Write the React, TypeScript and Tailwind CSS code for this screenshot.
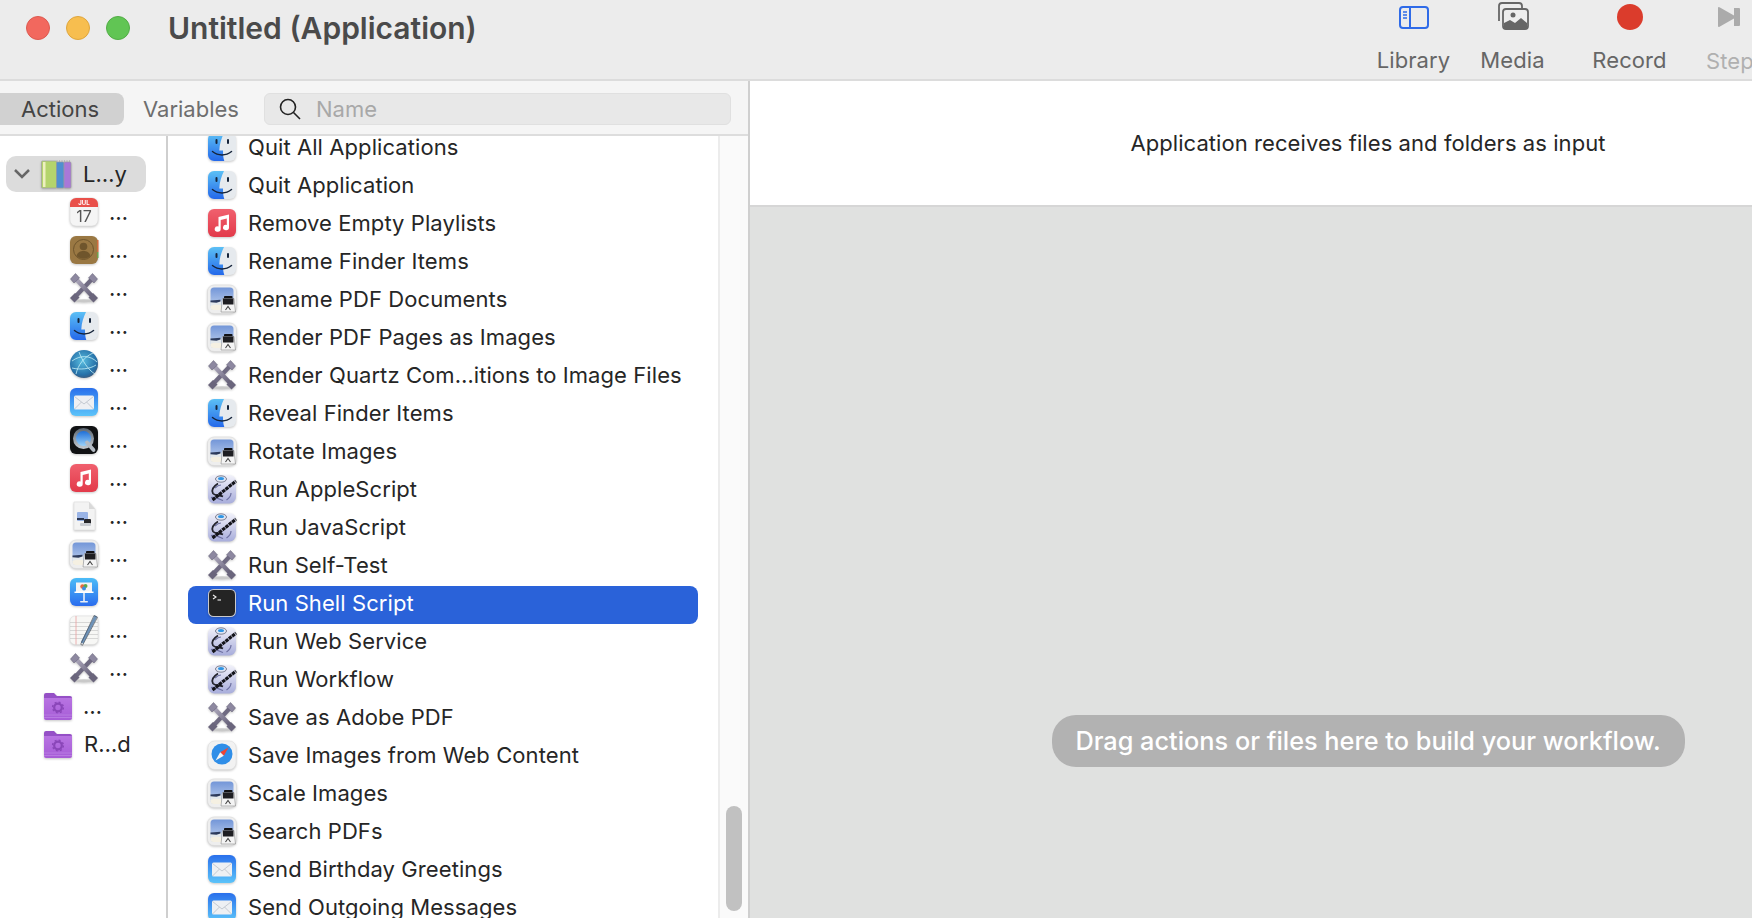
import type { ReactNode } from "react";

// Small app icons, all on a 32x32 grid
const Svg = ({ children, size = 32 }: { children: ReactNode; size?: number }) => (
  <svg viewBox="0 0 32 32" width={size} height={size} className="shrink-0 drop-shadow-[0_1px_1px_rgba(0,0,0,0.22)]">
    {children}
  </svg>
);

const Finder = () => (
  <Svg>
    <defs>
      <linearGradient id="finderL" x1="0" y1="0" x2="0" y2="1">
        <stop offset="0" stopColor="#5cc0f5" />
        <stop offset="1" stopColor="#2468ea" />
      </linearGradient>
    </defs>
    <rect x="2" y="2" width="28" height="28" rx="6" fill="#e6eaee" />
    <path d="M8 2h10c-2.500 5-4.500 11-4.700 17.500H17c0 4 .3 7.500 1.300 10.500H8a6 6 0 0 1-6-6V8a6 6 0 0 1 6-6z" fill="url(#finderL)" />
    <rect x="9.500" y="8" width="2" height="5" rx="1" fill="#16243a" />
    <rect x="21" y="8" width="2" height="5" rx="1" fill="#16243a" />
    <path d="M6.500 20.500c5.500 4.500 13.500 4.500 19 0" fill="none" stroke="#16243a" strokeWidth="1.500" strokeLinecap="round" />
  </Svg>
);

const Music = () => (
  <Svg>
    <defs>
      <linearGradient id="musicBg" x1="0" y1="0" x2="0" y2="1">
        <stop offset="0" stopColor="#f0606e" />
        <stop offset="1" stopColor="#e23a4a" />
      </linearGradient>
    </defs>
    <rect x="2" y="2" width="28" height="28" rx="6" fill="url(#musicBg)" />
    <path d="M12.500 10l10.500-2.500v13a3 2.700 0 1 1-2.200-2.600v-6.400l-6.100 1.400v9.200a3 2.700 0 1 1-2.200-2.600z" fill="#fff" />
  </Svg>
);

const Preview = () => (
  <Svg>
    <defs>
      <linearGradient id="sky" x1="0" y1="0" x2="0" y2="1">
        <stop offset="0" stopColor="#7396d8" />
        <stop offset="1" stopColor="#c6d6f0" />
      </linearGradient>
    </defs>
    <rect x="1.500" y="2" width="29" height="28.500" rx="6.500" fill="#eeeeee" stroke="#d8d8d8" strokeWidth=".6" />
    <rect x="4.500" y="4.500" width="23" height="22.500" rx="3.500" fill="url(#sky)" />
    <path d="M4.500 18l11-.8V27H8a3.500 3.500 0 0 1-3.500-3.500z" fill="#e4e9ec" />
    <path d="M4.500 17.500l10-.7v1.800l-4 1.200-6-.6z" fill="#2d3b5c" />
    <path d="M4.500 23c4-1.800 7-1.200 11-.8V27H8a3.500 3.500 0 0 1-3.500-3.500z" fill="#f5f0e2" />
    <rect x="18" y="13" width="8.500" height="2.500" rx=".8" fill="#111114" />
    <path d="M16.500 15.500h11.500l1.500 13.500h-14.500z" fill="#f4f4f4" stroke="#777" strokeWidth=".5" />
    <rect x="17" y="15.500" width="10.500" height="6" fill="#1e1e22" />
    <path d="M19.500 27l2.500-3.500 2.500 3.500" fill="none" stroke="#444" strokeWidth="1.100" />
  </Svg>
);

const Tools = () => (
  <Svg>
    <defs>
      <linearGradient id="toolBar" x1="0" y1="0" x2="1" y2="1">
        <stop offset="0" stopColor="#b3aec2" />
        <stop offset="1" stopColor="#5f5a72" />
      </linearGradient>
    </defs>
    <ellipse cx="16" cy="28.800" rx="11" ry="1.500" fill="#c9c9c9" />
    <path d="M25 6L7 25" stroke="#6f6a82" strokeWidth="4.200" />
    <path d="M7 6l18 19" stroke="url(#toolBar)" strokeWidth="4.200" />
    <path d="M2.500 7L7.500 1.500 11.500 6 6 11z" fill="#8d88a0" stroke="#5f5a72" strokeWidth=".5" />
    <path d="M29.500 7L24.500 1.500 20.500 6 26 11z" fill="#8d88a0" stroke="#5f5a72" strokeWidth=".5" />
    <path d="M2 26l5-5 4.500 4.500-5 5z" fill="#6a657c" />
    <path d="M30 26l-5-5-4.500 4.500 5 5z" fill="#6a657c" />
  </Svg>
);

const Automator = () => (
  <Svg>
    <defs>
      <linearGradient id="autoBg" x1="0" y1="0" x2="0" y2="1">
        <stop offset="0" stopColor="#f2f2fa" />
        <stop offset="1" stopColor="#a8addb" />
      </linearGradient>
    </defs>
    <rect x="2" y="2" width="28" height="28.500" rx="6.500" fill="url(#autoBg)" />
    <ellipse cx="15" cy="6" rx="5.500" ry="3.200" fill="#dfe6f4" stroke="#556" strokeWidth=".7" />
    <ellipse cx="15" cy="5.500" rx="3" ry="1.600" fill="#2f95e4" />
    <path d="M12 10.500c-5 3-7 7-5 10 2 2.500 6 1 10 3" fill="none" stroke="#23232c" strokeWidth="1.800" />
    <path d="M5 24.500c3-1 7 1 12 3M20.500 27c3-2 4.500-4 4.500-7M9 15c2-2 4-3 6-3" fill="none" stroke="#6d70a0" strokeWidth="1.200" />
    <path d="M6.500 27L30 8" stroke="#14141a" strokeWidth="3.200" strokeDasharray="3.500 .7" />
  </Svg>
);

const Terminal = () => (
  <Svg>
    <rect x="2" y="2" width="28" height="28" rx="5.500" fill="#c9c9cc" />
    <rect x="3" y="3" width="26" height="26" rx="4.500" fill="#242424" />
    <path d="M7 8l3 2-3 2" fill="none" stroke="#f0f0f0" strokeWidth="1.100" />
    <path d="M11.500 13h3.500" stroke="#f0f0f0" strokeWidth="1.100" />
  </Svg>
);

const Safari = () => (
  <Svg>
    <rect x="2" y="2" width="28" height="28.500" rx="6.500" fill="#f2f2f2" stroke="#dddddd" strokeWidth=".6" />
    <circle cx="16" cy="15" r="10.500" fill="#2f8ee8" />
    <path d="M22.500 8.500L17.800 16.800 14.200 13.200z" fill="#ee4433" />
    <path d="M9.500 21.500l4.700-8.300 3.600 3.600z" fill="#f4f4f4" />
  </Svg>
);

const Mail = () => (
  <Svg>
    <defs>
      <linearGradient id="mailBg" x1="0" y1="0" x2="0" y2="1">
        <stop offset="0" stopColor="#2a70ec" />
        <stop offset="1" stopColor="#5cc4fa" />
      </linearGradient>
    </defs>
    <rect x="2" y="2" width="28" height="28" rx="6" fill="url(#mailBg)" />
    <rect x="6" y="9.500" width="20" height="14" rx="1.500" fill="#eef0f3" />
    <path d="M6.500 10.500L16 18l9.500-7.500M6.500 23l7-7M25.500 23l-7-7" fill="none" stroke="#b9bfc8" strokeWidth=".8" />
  </Svg>
);

const Calendar = () => (
  <svg viewBox="0 0 32 32" width="32" height="32" className="shrink-0 drop-shadow-[0_1px_1px_rgba(0,0,0,0.22)]">
    <rect x="2" y="2" width="28" height="28" rx="6" fill="#f5f5f5" stroke="#dddddd" strokeWidth=".6" />
    <path d="M8 2h16a6 6 0 0 1 6 6v3H2V8a6 6 0 0 1 6-6z" fill="#e9504a" />
    <text x="16" y="9" textAnchor="middle" fontSize="6" fontWeight="700" fill="#fff" fontFamily="Inter, sans-serif">JUL</text>
    <text x="16" y="25.500" textAnchor="middle" fontSize="16" fill="#555" fontFamily="Inter, sans-serif">17</text>
  </svg>
);

const Contacts = () => (
  <Svg>
    <rect x="2" y="2" width="28" height="28" rx="6" fill="#9a7843" />
    <path d="M29 6h1.500v6H29zM29 12h1.500v6H29z" fill="#d06b3c" />
    <path d="M29 18h1.500v6H29z" fill="#6fa04a" />
    <circle cx="15.500" cy="15.500" r="10" fill="none" stroke="#6f552c" strokeWidth="1" />
    <circle cx="15.500" cy="12.500" r="3.800" fill="#6f552c" />
    <path d="M8.500 22c1-4 4-5 7-5s6 1 7 5c-4 3.500-10 3.500-14 0z" fill="#6f552c" />
  </Svg>
);

const Globe = () => (
  <Svg>
    <defs>
      <radialGradient id="globeBg" cx=".45" cy=".4" r=".7">
        <stop offset="0" stopColor="#58bde0" />
        <stop offset=".7" stopColor="#2670a8" />
        <stop offset="1" stopColor="#4a4f66" />
      </radialGradient>
    </defs>
    <circle cx="16" cy="16" r="14" fill="url(#globeBg)" />
    <path d="M4 13c8-6 18-6 25 1M8 26c2-9 8-17 17-21M11 4c3 8 9 18 16 22M4 20c8 2 18 1 24-3" fill="none" stroke="#c5f0f7" strokeWidth=".8" />
  </Svg>
);

const QuickTime = () => (
  <Svg>
    <defs>
      <linearGradient id="qtRing" x1="0" y1="0" x2="0" y2="1">
        <stop offset="0" stopColor="#5b6570" />
        <stop offset="1" stopColor="#c6ccd3" />
      </linearGradient>
      <linearGradient id="qtCore" x1="0" y1="0" x2="0" y2="1">
        <stop offset="0" stopColor="#1f6fd8" />
        <stop offset="1" stopColor="#9bd2fa" />
      </linearGradient>
    </defs>
    <rect x="2" y="2" width="28" height="28" rx="6" fill="#111214" />
    <circle cx="15.500" cy="14.500" r="10.500" fill="url(#qtRing)" />
    <circle cx="15.500" cy="14.500" r="7.500" fill="url(#qtCore)" />
    <path d="M19 18.500l6.500 7.500" stroke="#b4bbc4" strokeWidth="3.800" strokeLinecap="round" />
  </Svg>
);

const PdfDoc = () => (
  <Svg>
    <path d="M6 2h15l6 7v21H6z" fill="#f3f3f3" stroke="#dddddd" strokeWidth=".6" />
    <path d="M21 2v7h6z" fill="#d9d9d9" />
    <rect x="9" y="12" width="11" height="9" rx="1" fill="#9ab4e6" />
    <rect x="9" y="18" width="7" height="2" fill="#2a3752" />
    <rect x="16" y="19" width="7" height="5" rx="1" fill="#26262a" />
    <rect x="12" y="23" width="11" height="3" rx="1" fill="#c9ccd2" />
  </Svg>
);

const Keynote = () => (
  <Svg>
    <defs>
      <linearGradient id="keyBg" x1="0" y1="0" x2="0" y2="1">
        <stop offset="0" stopColor="#4bbcf7" />
        <stop offset="1" stopColor="#2a6cee" />
      </linearGradient>
    </defs>
    <rect x="2" y="2" width="28" height="28" rx="6" fill="url(#keyBg)" />
    <rect x="8" y="6.500" width="16" height="10" fill="#f4f4f4" />
    <rect x="6.500" y="15.500" width="19" height="1.500" fill="#ffffff" />
    <circle cx="14.500" cy="10.500" r="2.200" fill="#e8683d" />
    <circle cx="17.500" cy="10" r="2" fill="#5aa84b" />
    <circle cx="16" cy="12.500" r="2" fill="#3c8ee0" />
    <rect x="15.200" y="17" width="1.600" height="8.500" fill="#e8eef6" />
    <rect x="12" y="25" width="8" height="1.400" rx=".7" fill="#e8eef6" />
  </Svg>
);

const TextEdit = () => (
  <Svg>
    <rect x="2" y="2" width="28" height="28.500" rx="5" fill="#f7f7f5" stroke="#dddddd" strokeWidth=".6" />
    <path d="M2 8.500h28M2 12.500h28M2 16.500h28M2 20.500h28M2 24.500h28" stroke="#c8c8c8" strokeWidth=".7" />
    <path d="M8 2v28.500" stroke="#eaa0a0" strokeWidth=".8" />
    <path d="M28 2L14 29" stroke="#6f93b8" strokeWidth="3" />
    <path d="M26 1.500l3.500 1.800-15 28-1.800-1z" fill="none" stroke="#3a3f48" strokeWidth=".6" />
  </Svg>
);

const PurpleFolder = () => (
  <Svg>
    <defs>
      <linearGradient id="folderBg" x1="0" y1="0" x2="0" y2="1">
        <stop offset="0" stopColor="#b874e2" />
        <stop offset="1" stopColor="#a65cd6" />
      </linearGradient>
    </defs>
    <path d="M2 5a2 2 0 0 1 2-2h8l3 3h13a2 2 0 0 1 2 2v4H2z" fill="#9550c6" />
    <path d="M2 8h28v20a2 2 0 0 1-2 2H4a2 2 0 0 1-2-2z" fill="url(#folderBg)" />
    <path d="M2 25h28M2 27.500h28" stroke="#bf86e6" strokeWidth=".7" />
    <circle cx="16" cy="17.500" r="3.800" fill="none" stroke="#8a46b8" strokeWidth="2.200" />
    <circle cx="16" cy="17.500" r="5.400" fill="none" stroke="#8a46b8" strokeWidth="1.400" strokeDasharray="2 2.240" />
  </Svg>
);

const Books = () => (
  <Svg>
    <rect x="1.500" y="3" width="15" height="27" rx="1" fill="#b4d46c" stroke="#9a9a9a" strokeWidth=".6" />
    <rect x="3" y="4" width="2.500" height="25" fill="#eef0c0" />
    <rect x="16.500" y="4" width="7.500" height="26" rx="1" fill="#4f8fd0" stroke="#9a9a9a" strokeWidth=".6" />
    <rect x="24" y="4" width="7" height="26" rx="1" fill="#a878d8" stroke="#9a9a9a" strokeWidth=".6" />
    <path d="M16.500 3h14" stroke="#9a9a9a" strokeWidth="1" strokeDasharray="1 1.500" />
  </Svg>
);

const libraryChildren = [Calendar, Contacts, Tools, Finder, Globe, Mail, QuickTime, Music, PdfDoc, Preview, Keynote, TextEdit, Tools];

const actions = [
  { icon: Finder, title: "Quit All Applications" },
  { icon: Finder, title: "Quit Application" },
  { icon: Music, title: "Remove Empty Playlists" },
  { icon: Finder, title: "Rename Finder Items" },
  { icon: Preview, title: "Rename PDF Documents" },
  { icon: Preview, title: "Render PDF Pages as Images" },
  { icon: Tools, title: "Render Quartz Com…itions to Image Files" },
  { icon: Finder, title: "Reveal Finder Items" },
  { icon: Preview, title: "Rotate Images" },
  { icon: Automator, title: "Run AppleScript" },
  { icon: Automator, title: "Run JavaScript" },
  { icon: Tools, title: "Run Self-Test" },
  { icon: Terminal, title: "Run Shell Script", selected: true },
  { icon: Automator, title: "Run Web Service" },
  { icon: Automator, title: "Run Workflow" },
  { icon: Tools, title: "Save as Adobe PDF" },
  { icon: Safari, title: "Save Images from Web Content" },
  { icon: Preview, title: "Scale Images" },
  { icon: Preview, title: "Search PDFs" },
  { icon: Mail, title: "Send Birthday Greetings" },
  { icon: Mail, title: "Send Outgoing Messages" },
];

export default function App() {
  return (
    <div className="h-[918px] w-[1752px] overflow-hidden bg-white font-['Inter',sans-serif] text-[#262626] flex flex-col">
      {/* Title bar */}
      <header className="h-[81px] shrink-0 bg-[#ececec] border-b-2 border-[#dcdcdc] flex">
        <div className="flex items-start gap-4 pl-[26px] pt-4">
          <span className="w-6 h-6 rounded-full bg-[#f2685e] border border-[#dd5a50]"></span>
          <span className="w-6 h-6 rounded-full bg-[#f7be4f] border border-[#dfa63d]"></span>
          <span className="w-6 h-6 rounded-full bg-[#61c554] border border-[#52ad46]"></span>
        </div>
        <h1 className="ml-[38px] pt-[9px] text-[30px] leading-[38px] font-semibold text-[#4a4a4a]">Untitled (Application)</h1>
        <div className="ml-auto flex text-[22px] leading-[26px] tracking-[0.1px] text-[#666666]">
          <div className="w-[99px] flex flex-col items-center">
            <svg width="32" height="26" viewBox="0 0 32 26" className="mt-1">
              <rect x="2" y="3" width="28" height="21" rx="3" fill="none" stroke="#2f6be8" strokeWidth="2" />
              <path d="M12 3v21" stroke="#2f6be8" strokeWidth="2" />
              <path d="M5 8h4M5 11h4M5 14h4" stroke="#2f6be8" strokeWidth="1.600" />
            </svg>
            <span className="mt-[17px]">Library</span>
          </div>
          <div className="w-[99px] flex flex-col items-center">
            <svg width="34" height="30" viewBox="0 0 34 30">
              <path d="M3 21V6a3 3 0 0 1 3-3h17a3 3 0 0 1 3 3v2" fill="none" stroke="#666" strokeWidth="1.800" />
              <rect x="7" y="9" width="25" height="20" rx="3" fill="#eeeeee" stroke="#666" strokeWidth="1.800" />
              <circle cx="17" cy="15" r="2.500" fill="#666" />
              <path d="M8 28v-5l6-3 5 3 6-5 6 5v5z" fill="#666" />
            </svg>
            <span className="mt-[17px]">Media</span>
          </div>
          <div className="w-[135px] flex flex-col items-center">
            <span className="mt-1 mb-[1px] w-[26px] h-[26px] rounded-full bg-[#db3c2c]"></span>
            <span className="mt-[16px]">Record</span>
          </div>
          <div className="w-[46px] ml-[9px] flex flex-col text-[#b0b0b0] overflow-hidden">
            <svg width="26" height="24" viewBox="0 0 26 24" className="mt-[5px] ml-[11px]">
              <path d="M1 3a1 1 0 0 1 1.500-.8L17 10.500V3h5a1 1 0 0 1 1 1v16a1 1 0 0 1-1 1h-5v-7.500L2.500 21.800A1 1 0 0 1 1 21z" fill="#ababab" />
            </svg>
            <span className="mt-[19px]">Step</span>
          </div>
        </div>
      </header>

      <div className="flex flex-1 min-h-0">
        {/* Library pane */}
        <section className="w-[750px] shrink-0 flex flex-col border-r-2 border-[#cfcfcf]">
          <div className="h-[55px] shrink-0 bg-[#f5f5f5] border-b-2 border-[#dddddd] flex items-start pt-3 text-[22px] leading-[32px]">
            <div className="w-[124px] h-8 rounded-r-lg bg-[#d1d1d1] text-[#444444] pl-[21px]">Actions</div>
            <div className="ml-[19px] text-[#6e6e6e]">Variables</div>
            <div className="ml-[25px] w-[467px] h-8 rounded-md bg-[#e8e8e8] border border-[#e0e0e0] flex items-center pl-[13px] text-[#a8a8a8]">
              <svg width="24" height="24" viewBox="0 0 24 24" fill="none" stroke="#222" strokeWidth="1.600">
                <circle cx="10" cy="10" r="7.500" />
                <path d="M15.500 15.500L22 22" />
              </svg>
              <span className="ml-[14px]">Name</span>
            </div>
          </div>

          <div className="flex flex-1 min-h-0">
            {/* Category tree */}
            <nav className="w-[168px] shrink-0 border-r-2 border-[#cfcfcf] pt-[20px] text-[22px]">
              <div className="ml-1.5 w-[140px] h-[36px] mb-px rounded-[10px] bg-[#dcdcdc] flex items-center">
                <svg width="18" height="12" viewBox="0 0 18 12" className="ml-[7px]" fill="none" stroke="#666" strokeWidth="2.500">
                  <path d="M2 2l7 7 7-7" />
                </svg>
                <span className="ml-[9px]"><Books /></span>
                <span className="ml-[11px]">L…y</span>
              </div>
              {libraryChildren.map((Icon, i) => (
                <div key={i} className="h-[38px] pl-[68px] flex items-center">
                  <Icon />
                  <span className="ml-[9px] leading-none">…</span>
                </div>
              ))}
              <div className="h-[38px] pl-[42px] flex items-center">
                <PurpleFolder />
                <span className="ml-[9px] leading-none">…</span>
              </div>
              <div className="h-[38px] pl-[42px] flex items-center">
                <PurpleFolder />
                <span className="ml-[10px] leading-none">R…d</span>
              </div>
            </nav>

            {/* Action list */}
            <div className="w-[550px] shrink-0 overflow-hidden">
              <ul className="-mt-[6px] pl-5 pr-5">
                {actions.map((a) => (
                  <li
                    key={a.title}
                    className={
                      a.selected
                        ? "h-[38px] rounded-lg flex items-center pl-[18px] pb-[4px] bg-[#2a62d9] text-white text-[22px] tracking-[0.08px]"
                        : "h-[38px] flex items-center pl-[18px] pb-[4px] text-[22px] tracking-[0.08px]"
                    }
                  >
                    <a.icon />
                    <span className="ml-[10px] whitespace-nowrap">{a.title}</span>
                  </li>
                ))}
              </ul>
            </div>

            {/* Scrollbar track */}
            <div className="flex-1 bg-[#fafafa] border-l-2 border-[#ececec] flex flex-col justify-end items-center pb-[7px]">
              <div className="w-4 h-[105px] rounded-full bg-[#c1c1c1]"></div>
            </div>
          </div>
        </section>

        {/* Workflow pane, runs past the edge of the shot */}
        <section className="w-[1236px] shrink-0 flex flex-col">
          <div className="h-[126px] shrink-0 bg-white border-b-2 border-[#d6d6d6] flex justify-center pt-[47px] text-[22px] leading-[30px] tracking-[0.07px] text-[#262626]">
            Application receives files and folders as input
          </div>
          <div className="flex-1 bg-[#e0e1e0] flex justify-center items-start pt-[508px]">
            <div className="h-[52px] w-[633px] rounded-[24px] bg-[#b2b2b2] text-white text-[25.3px] font-medium flex items-center justify-center">
              Drag actions or files here to build your workflow.
            </div>
          </div>
        </section>
      </div>
    </div>
  );
}
